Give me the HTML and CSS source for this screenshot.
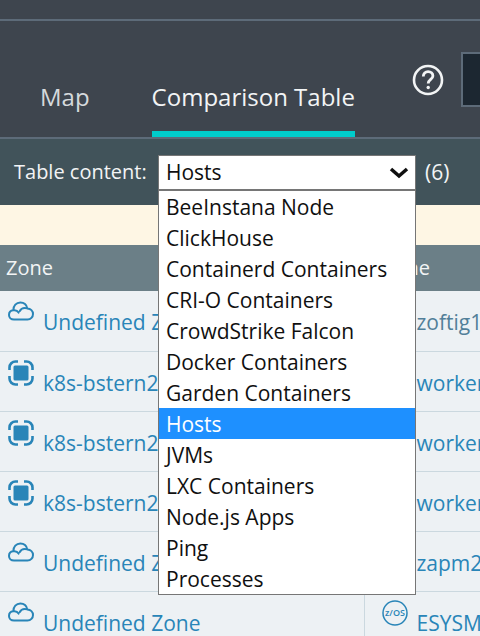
FILE: index.html
```html
<!DOCTYPE html>
<html lang="en">
<head>
<meta charset="utf-8">
<title>Comparison Table</title>
<link rel="stylesheet" href="styles.css">
</head>
<body>
<svg class="symbols" aria-hidden="true">
  <symbol id="cloud" viewBox="0 0 26 26"><path d="M6 20.500C3 20.500 1 18.500 1 16c0-2.600 1.800-4.500 4.300-4.700C5.300 6.700 8.300 3.500 12.300 3.500c3.500 0 6.300 2.300 7 5.900 3.400.2 5.700 2.500 5.700 5.500s-2.300 5.600-5.500 5.600zM5.300 11.300c2.400-.4 4.200.4 5.300 2.300M11.800 12c1.200-2.300 4.300-3.500 7.500-2.600" fill="none" stroke="currentColor" stroke-width="2" stroke-linecap="round"/></symbol>
  <symbol id="cluster" viewBox="0 0 26 26"><rect x="5.500" y="5.500" width="15" height="15" rx="1.500" fill="currentColor"/><path d="M1.500 10V7.500a6 6 0 0 1 6-6H10M16 1.500h2.500a6 6 0 0 1 6 6V10M24.500 16v2.500a6 6 0 0 1-6 6H16M10 24.500H7.500a6 6 0 0 1-6-6V16" fill="none" stroke="currentColor" stroke-width="2.600"/></symbol>
  <symbol id="zos" viewBox="0 0 26 26"><circle cx="13" cy="13" r="12" fill="none" stroke="currentColor" stroke-width="1.500"/><text x="13" y="16" text-anchor="middle" font-size="9" font-weight="600" fill="currentColor">z/OS</text></symbol>
</svg>
<div class="topbar"></div>
<header class="header">
  <nav class="tabs">
    <a class="tab" href="#map">Map</a>
    <a class="tab active" href="#table" aria-current="page">Comparison Table</a>
  </nav>
  <button class="help" type="button" aria-label="Help">
    <svg viewBox="0 0 32 32" width="32" height="32"><circle cx="16" cy="16" r="14" fill="none" stroke="currentColor" stroke-width="2.600"/><path d="M11.300 12.500c0-3 2-4.900 4.800-4.900s4.800 1.800 4.800 4.300c0 3.400-4.700 3.600-4.700 7.600" fill="none" stroke="currentColor" stroke-width="2.800"/><circle cx="16.200" cy="23.500" r="1.700" fill="currentColor"/></svg>
  </button>
  <input class="search" type="text" aria-label="Search">
</header>
<div class="toolbar">
  <label for="content">Table content:</label>
  <div class="picker">
    <select id="content"><option>Hosts</option></select>
    <svg class="chevron" viewBox="0 0 20 12" width="20" height="12" aria-hidden="true"><path d="M2 2l8 7 8-7" fill="none" stroke="currentColor" stroke-width="3.500"/></svg>
    <ul class="menu" role="listbox" aria-label="Table content">
      <li role="option">BeeInstana Node</li>
      <li role="option">ClickHouse</li>
      <li role="option">Containerd Containers</li>
      <li role="option">CRI-O Containers</li>
      <li role="option">CrowdStrike Falcon</li>
      <li role="option">Docker Containers</li>
      <li role="option">Garden Containers</li>
      <li role="option" class="selected" aria-selected="true">Hosts</li>
      <li role="option">JVMs</li>
      <li role="option">LXC Containers</li>
      <li role="option">Node.js Apps</li>
      <li role="option">Ping</li>
      <li role="option">Processes</li>
    </ul>
  </div>
  <span>(6)</span>
</div>
<div class="notice"></div>
<table class="grid">
  <thead><tr><th class="zone">Zone</th><th>Name</th></tr></thead>
  <tbody>
    <tr><td><a href="#z1"><svg><use href="#cloud"/></svg><span>Undefined Zone</span></a></td><td><a class="muted" href="#h1"><svg><use href="#zos"/></svg><span>zoftig1</span></a></td></tr>
    <tr><td><a href="#z2"><svg><use href="#cluster"/></svg><span>k8s-bstern2</span></a></td><td><a href="#h2"><svg><use href="#zos"/></svg><span>worker</span></a></td></tr>
    <tr><td><a href="#z3"><svg><use href="#cluster"/></svg><span>k8s-bstern2</span></a></td><td><a href="#h3"><svg><use href="#zos"/></svg><span>worker</span></a></td></tr>
    <tr><td><a href="#z4"><svg><use href="#cluster"/></svg><span>k8s-bstern2</span></a></td><td><a href="#h4"><svg><use href="#zos"/></svg><span>worker</span></a></td></tr>
    <tr><td><a href="#z5"><svg><use href="#cloud"/></svg><span>Undefined Zone</span></a></td><td><a href="#h5"><svg><use href="#zos"/></svg><span>zapm2</span></a></td></tr>
    <tr><td><a href="#z6"><svg><use href="#cloud"/></svg><span>Undefined Zone</span></a></td><td><a href="#h6"><svg><use href="#zos"/></svg><span>ESYSM</span></a></td></tr>
  </tbody>
</table>
</body>
</html>
```
FILE: styles.css
```css
* { box-sizing: border-box; }
body {
  margin: 0;
  overflow: hidden;
  background: #edf1f4;
  color: #f2f4f5;
  font: 21px/30px "Open Sans", "Noto Sans", sans-serif;
}
.symbols { position: absolute; width: 0; height: 0; }
.topbar { height: 21px; background: #3e454e; border-bottom: 2px solid #5d6b79; }
.header {
  display: flex;
  align-items: flex-start;
  height: 118px;
  overflow: hidden;
  background: #3e454e;
  border-bottom: 2px solid #5d6b79;
}
.tabs { display: flex; gap: 62px; padding-left: 40px; flex: none; }
.tab {
  height: 116px;
  padding-top: 61px;
  color: #d5d9dc;
  font-size: 24px;
  text-decoration: none;
  white-space: nowrap;
}
.tab.active { color: #f2f4f5; border-bottom: 6px solid #00cccb; }
.help {
  flex: none;
  width: 32px;
  height: 32px;
  margin: 43px 17px 0 auto;
  padding: 0;
  border: 0;
  background: none;
  color: #f2f4f5;
}
.search {
  flex: none;
  width: 19px;
  height: 55px;
  margin-top: 31px;
  border: 2px solid #5d6b79;
  border-right: 0;
  background: #1c2731;
}
.toolbar {
  display: flex;
  align-items: center;
  gap: 9px;
  height: 66px;
  padding-left: 14px;
  background: #41535a;
}
.toolbar label { width: 135px; font-size: 20px; white-space: nowrap; }
.picker { position: relative; width: 258px; }
.picker select {
  display: block;
  appearance: none;
  width: 100%;
  height: 35px;
  padding: 0 7px;
  border: 1px solid #767676;
  border-radius: 0;
  background: #fff;
  color: #101010;
  font: inherit;
}
.chevron { position: absolute; right: 7px; top: 12px; color: #101010; }
.menu {
  position: absolute;
  z-index: 1;
  top: 100%;
  left: 0;
  width: 100%;
  margin: 0;
  padding: 0;
  border: 1px solid #767676;
  background: #fff;
  color: #101010;
  line-height: 32px;
  list-style: none;
}
.menu li { height: 31px; padding-left: 7px; white-space: nowrap; }
.menu .selected { background: #1e90ff; color: #fff; }
.notice { height: 40px; background: #fef6e4; }
.grid { width: 100%; table-layout: fixed; border-collapse: collapse; }
.grid th {
  height: 46px;
  padding: 0 6px;
  background: #6b7f87;
  text-align: left;
  font-size: 20px;
  font-weight: 400;
}
.grid th + th { padding-left: 10px; }
.grid .zone { width: 364px; }
.grid td {
  height: 60px;
  padding: 0 0 0 17px;
  overflow: hidden;
  border-bottom: 1px solid #cbd8df;
  vertical-align: top;
}
.grid td:first-child { padding-left: 8px; border-right: 1px solid #cbd8df; }
.grid a {
  display: flex;
  gap: 9px;
  color: #2985b8;
  text-decoration: none;
  white-space: nowrap;
}
.grid .muted { color: #527f99; }
.grid svg { flex: none; width: 26px; height: 26px; margin-top: 8px; }
.grid span { padding-top: 16px; }
```
